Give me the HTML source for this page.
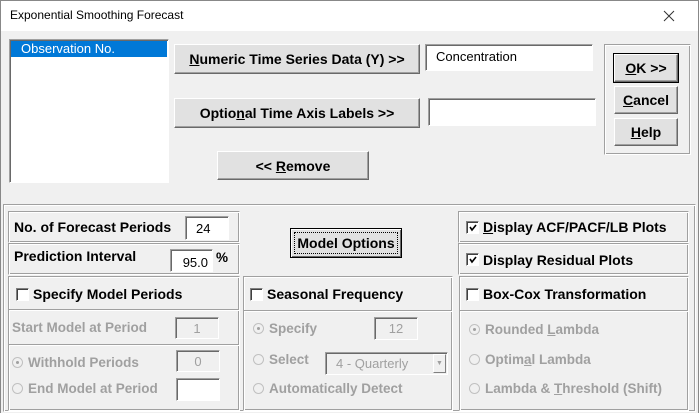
<!DOCTYPE html>
<html><head><meta charset="utf-8"><style>
*{margin:0;padding:0;box-sizing:border-box}
body{width:699px;height:413px;overflow:hidden;background:#f0f0f0;font-family:"Liberation Sans",Arial,sans-serif;position:relative}
.a{position:absolute}
.b{font-weight:bold;font-size:13.5px;color:#000;white-space:nowrap}
.g{color:#a0a0a0}
.btn{position:absolute;background:#e1e1e1;border:1px solid;border-color:#fff #696969 #696969 #fff;box-shadow:inset -1px -1px 0 #a0a0a0;display:flex;align-items:center;justify-content:center;font-weight:bold;font-size:14px;white-space:nowrap}
.tb{position:absolute;background:#fff;border:1px solid;border-color:#a0a0a0 #fff #fff #a0a0a0;box-shadow:inset 1px 1px 0 #696969;font-size:13px;padding-left:10px;display:flex;align-items:center}
.tbd{background:#f0f0f0;color:#a0a0a0}
.grp{position:absolute;border:1px solid;border-color:#a0a0a0 #fff #fff #a0a0a0;box-shadow:inset 1px 1px 0 #fff, inset -1px -1px 0 #a0a0a0}
.sep{position:absolute;height:2px;border-top:1px solid #a0a0a0;border-bottom:1px solid #fff}
.cb{position:absolute;width:13px;height:13px;background:#fff;border:1px solid;border-color:#808080 #fff #fff #808080;box-shadow:inset 1px 1px 0 #404040}
.cb svg{position:absolute;left:1px;top:1px}
.rd{position:absolute;width:11px;height:11px;border-radius:50%;border:1px solid #c0c0c0;background:#f0f0f0}
.rd.on::after{content:"";position:absolute;left:3px;top:3px;width:3px;height:3px;border-radius:50%;background:#a0a0a0}
u{text-decoration:underline}
</style></head><body>
<div class="a" style="left:0;top:0;width:699px;height:31px;background:#fff"></div>
<div class="a" style="left:0;top:0;width:1px;height:413px;background:#888"></div>
<div class="a" style="right:0;top:0;width:1px;height:413px;background:#888"></div>
<div class="a" style="left:0;top:0;width:699px;height:1px;background:#888"></div>
<div class="a" style="left:10px;top:8px;font-size:12px;color:#000">Exponential Smoothing Forecast</div>
<svg class="a" style="left:663px;top:10px" width="12" height="12"><path d="M1 1L11 11M11 1L1 11" stroke="#333" stroke-width="1"/></svg>

<div class="a" style="left:9px;top:39px;width:160px;height:144px;background:#fff;border:1px solid;border-color:#a0a0a0 #fff #fff #a0a0a0;box-shadow:inset 1px 1px 0 #696969"></div>
<div class="a" style="left:11px;top:41px;width:156px;height:16px;background:#0078d7;color:#fff;font-size:13px;padding-left:10px;line-height:16px">Observation No.</div>

<div class="btn" style="left:174px;top:44px;width:246px;height:30px"><span><u>N</u>umeric Time Series Data (Y) &gt;&gt;</span></div>
<div class="tb" style="left:425px;top:44px;width:168px;height:27px;align-items:flex-start;padding-top:4px">Concentration</div>
<div class="btn" style="left:174px;top:98px;width:246px;height:30px"><span>Optio<u>n</u>al Time Axis Labels &gt;&gt;</span></div>
<div class="tb" style="left:428px;top:98px;width:168px;height:28px"></div>
<div class="btn" style="left:217px;top:151px;width:152px;height:29px"><span>&lt;&lt; <u>R</u>emove</span></div>

<div class="grp" style="left:604px;top:44px;width:87px;height:111px"></div>
<div class="btn" style="left:614px;top:54px;width:64px;height:28px;outline:1px solid #000"><span><u>O</u>K &gt;&gt;</span></div>
<div class="btn" style="left:614px;top:86px;width:64px;height:28px"><span><u>C</u>ancel</span></div>
<div class="btn" style="left:614px;top:118px;width:64px;height:28px"><span><u>H</u>elp</span></div>

<div class="grp" style="left:3px;top:204px;width:693px;height:208px"></div>

<div class="grp" style="left:8px;top:211px;width:232px;height:32px"></div>
<div class="a b" style="left:14px;top:219px;font-size:14px">No. of Forecast Periods</div>
<div class="tb" style="left:185px;top:216px;width:44px;height:24px">24</div>
<div class="grp" style="left:8px;top:243px;width:232px;height:32px"></div>
<div class="a b" style="left:14px;top:248px;font-size:14px">Prediction Interval</div>
<div class="tb" style="left:170px;top:249px;width:43px;height:23px;justify-content:flex-end;padding-right:4px;padding-top:4px">95.0</div>
<div class="a b" style="left:216px;top:250px">%</div>

<div class="grp" style="left:8px;top:276px;width:232px;height:135px"></div>
<div class="sep" style="left:9px;top:309px;width:230px"></div>
<div class="sep" style="left:9px;top:344px;width:230px"></div>
<div class="cb" style="left:16px;top:288px"></div>
<div class="a b" style="left:33px;top:286px;font-size:14px">Specify Model Periods</div>
<div class="a b g" style="left:12px;top:320px">Start Model at Period</div>
<div class="tb tbd" style="left:175px;top:317px;width:44px;height:22px;justify-content:center;padding:0">1</div>
<div class="rd on" style="left:12px;top:357px"></div>
<div class="a b g" style="left:28px;top:355px">Withhold Periods</div>
<div class="tb tbd" style="left:176px;top:350px;width:44px;height:22px;justify-content:center;padding:0">0</div>
<div class="rd" style="left:12px;top:383px"></div>
<div class="a b g" style="left:28px;top:381px">End Model at Period</div>
<div class="tb" style="left:176px;top:378px;width:44px;height:23px"></div>

<div class="btn" style="left:290px;top:228px;width:112px;height:30px;border:1px solid #000;box-shadow:inset 1px 1px 0 #fff,inset -1px -1px 0 #696969"><span style="outline:1px dotted #000;padding:2px 2px">Model Options</span></div>

<div class="grp" style="left:243px;top:276px;width:210px;height:135px"></div>
<div class="sep" style="left:244px;top:310px;width:208px"></div>
<div class="cb" style="left:250px;top:288px"></div>
<div class="a b" style="left:267px;top:286px;font-size:14px">Seasonal Frequency</div>
<div class="rd on" style="left:253px;top:323px"></div>
<div class="a b g" style="left:269px;top:321px">Specify</div>
<div class="tb tbd" style="left:374px;top:317px;width:44px;height:23px;justify-content:center;padding:0">12</div>
<div class="rd" style="left:253px;top:354px"></div>
<div class="a b g" style="left:269px;top:352px">Select</div>
<div class="tb tbd" style="left:325px;top:352px;width:123px;height:23px;padding-left:10px;background:#f0f0f0">4 - Quarterly</div>
<div class="a" style="left:433px;top:354px;width:13px;height:19px;background:#f0f0f0;border:1px solid;border-color:#fff #808080 #808080 #fff;font-size:7px;color:#a0a0a0;text-align:center;line-height:18px">▼</div>
<div class="rd" style="left:253px;top:383px"></div>
<div class="a b g" style="left:269px;top:381px">Automatically Detect</div>

<div class="grp" style="left:458px;top:211px;width:231px;height:32px"></div>
<div class="cb" style="left:466px;top:221px"><svg width="10" height="10"><path d="M2 4L4 7L8 2" stroke="#000" stroke-width="1.6" fill="none"/></svg></div>
<div class="a b" style="left:483px;top:219px;font-size:14px"><u>D</u>isplay ACF/PACF/LB Plots</div>
<div class="grp" style="left:458px;top:243px;width:231px;height:32px"></div>
<div class="cb" style="left:466px;top:253px"><svg width="10" height="10"><path d="M2 4L4 7L8 2" stroke="#000" stroke-width="1.6" fill="none"/></svg></div>
<div class="a b" style="left:483px;top:252px;font-size:14px">Display Residual Plots</div>

<div class="grp" style="left:459px;top:276px;width:230px;height:135px"></div>
<div class="sep" style="left:460px;top:310px;width:228px"></div>
<div class="cb" style="left:466px;top:288px"></div>
<div class="a b" style="left:483px;top:286px;font-size:14px">Box-Cox Transformation</div>
<div class="rd on" style="left:469px;top:324px"></div>
<div class="a b g" style="left:485px;top:322px">Rounded <u>L</u>ambda</div>
<div class="rd" style="left:469px;top:354px"></div>
<div class="a b g" style="left:485px;top:352px">Optim<u>a</u>l Lambda</div>
<div class="rd" style="left:469px;top:383px"></div>
<div class="a b g" style="left:485px;top:381px">Lambda &amp; <u>T</u>hreshold (Shift)</div>
</body></html>
